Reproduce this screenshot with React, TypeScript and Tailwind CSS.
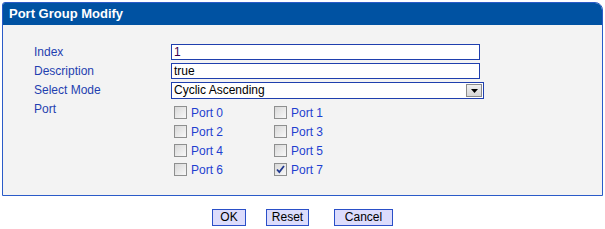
import React from "react"

const ports = [0, 1, 2, 3, 4, 5, 6, 7]
const checkedPorts = [7]

function Checkbox({ checked }: { checked: boolean }) {
  return (
    <span className="ml-[3px] flex h-[13px] w-[13px] shrink-0 items-center justify-center border border-[#8e8f8f] bg-gradient-to-br from-[#d8d8d8] to-[#f8f8f8]">
      {checked && (
        <svg width="9" height="9" viewBox="0 0 9 9">
          <path d="M1 4.5 L3.3 7 L8 1" fill="none" stroke="#21398f" strokeWidth="1.8" />
        </svg>
      )}
    </span>
  )
}

function Row({ label, children }: { label: string; children: React.ReactNode }) {
  return (
    <div className="flex h-[19px] items-start">
      <div className="w-[137px] leading-[16px] text-[#1f3fb0]">{label}</div>
      {children}
    </div>
  )
}

export default function App() {
  return (
    <div className="px-[2px] pt-[2px] font-['Liberation_Sans',Arial,sans-serif] text-[12px]">
      <div className="overflow-hidden rounded-tl-[3px] rounded-tr-[8px] border border-[#2a5bc8] bg-[#f3f3f3]">
        <div className="h-[22px] bg-[#0052a2] pl-[6px] text-[13px] font-bold leading-[22px] text-white">
          Port Group Modify
        </div>
        <div className="pb-[16px] pl-[31px] pt-[19px]">
          <Row label="Index">
            <div className="h-[16px] w-[309px] border border-[#1f3fae] bg-white pl-[2px] leading-[14px] text-[#3c0050]">
              1
            </div>
          </Row>
          <Row label="Description">
            <div className="h-[16px] w-[309px] border border-[#1f3fae] bg-white pl-[2px] leading-[14px] text-black">
              true
            </div>
          </Row>
          <Row label="Select Mode">
            <div className="flex h-[17px] w-[313px] items-center justify-between border border-[#1f3fae] bg-white pl-[2px] leading-[15px] text-black">
              <span>Cyclic Ascending</span>
              <span className="mr-px flex h-[13px] w-[16px] items-center justify-center border border-[#8a8a8a] bg-gradient-to-b from-[#f0f0f0] to-[#d6d6d6]">
                <svg width="7" height="4" viewBox="0 0 7 4">
                  <path d="M0 0 L7 0 L3.5 4 Z" fill="#000" />
                </svg>
              </span>
            </div>
          </Row>
          <div className="flex items-start">
            <div className="w-[137px] leading-[16px] text-[#1f3fb0]">Port</div>
            <div className="mt-[2px] grid grid-cols-[100px_100px]">
              {ports.map((p) => (
                <div key={p} className="flex h-[19px] items-center gap-[4px] text-[#1e3fd0]">
                  <Checkbox checked={checkedPorts.includes(p)} />
                  <span>Port {p}</span>
                </div>
              ))}
            </div>
          </div>
        </div>
      </div>
      <div className="mt-[13px] flex justify-center">
        <button className="h-[17px] w-[34px] border border-[#2a4fc8] bg-[#dcdcfc] leading-[15px] text-black">
          OK
        </button>
        <button className="ml-[20px] h-[17px] w-[43px] border border-[#2a4fc8] bg-[#dcdcfc] leading-[15px] text-black">
          Reset
        </button>
        <button className="ml-[25px] h-[17px] w-[59px] border border-[#2a4fc8] bg-[#dcdcfc] leading-[15px] text-black">
          Cancel
        </button>
      </div>
    </div>
  )
}
